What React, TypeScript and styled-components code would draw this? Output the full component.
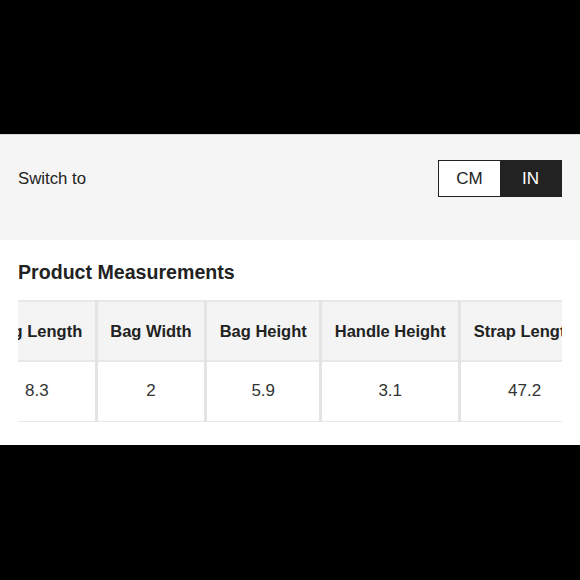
import React, { FC, useEffect, useRef } from 'react';
import styled, { createGlobalStyle } from 'styled-components';

const GlobalStyle = createGlobalStyle`
  html, body {
    margin: 0;
    padding: 0;
    background: #000;
  }
  body {
    font-family: 'Liberation Sans', Arial, sans-serif;
    color: #222;
  }
`;

const Page = styled.div`
  width: 580px;
  height: 580px;
  display: flex;
  flex-direction: column;
  padding-top: 134px;
  box-sizing: border-box;
`;

const Panel = styled.div`
  display: flex;
  flex-direction: column;
  border-top: 1px solid #d8d8d8;
`;

const UnitBar = styled.div`
  background: #f5f5f5;
  display: flex;
  justify-content: space-between;
  align-items: center;
  padding: 25px 18px 43px;
  height: 37px;
`;

const Label = styled.span`
  font-size: 16.8px;
  color: #222;
`;

const Toggle = styled.div`
  display: flex;
  border: 1.5px solid #222;
  height: 37px;
  box-sizing: border-box;
`;

const ToggleOption = styled.div<{ $active?: boolean }>`
  width: 61px;
  display: flex;
  align-items: center;
  justify-content: center;
  font-size: 17px;
  background: ${(p) => (p.$active ? '#222' : '#fff')};
  color: ${(p) => (p.$active ? '#fff' : '#222')};
`;

const Section = styled.div`
  background: #fff;
  padding: 21px 18px 23px;
`;

const Title = styled.h2`
  margin: 0 0 17px;
  font-size: 19.6px;
  font-weight: bold;
  line-height: 22px;
  color: #222;
`;

const Scroller = styled.div`
  overflow-x: auto;
  scrollbar-width: none;
  &::-webkit-scrollbar {
    display: none;
  }
`;

const Table = styled.table`
  border-collapse: collapse;
  white-space: nowrap;
`;

const HeadCell = styled.th`
  height: 60px;
  padding: 0 12.5px;
  background: #f4f4f4;
  border-top: 2px solid #e8e8e8;
  border-bottom: 2px solid #e8e8e8;
  border-right: 3px solid #e4e4e4;
  font-size: 16.5px;
  font-weight: bold;
  color: #222;
  box-sizing: border-box;
`;

const Cell = styled.td`
  height: 60px;
  padding: 0 12.5px;
  text-align: center;
  border-bottom: 1.5px solid #e8e8e8;
  border-right: 3px solid #e4e4e4;
  font-size: 17px;
  color: #333;
  box-sizing: border-box;
`;

const measurements = [
  { label: 'Bag Length', value: '8.3' },
  { label: 'Bag Width', value: '2' },
  { label: 'Bag Height', value: '5.9' },
  { label: 'Handle Height', value: '3.1' },
  { label: 'Strap Length', value: '47.2' },
];

const App: FC = () => {
  const scrollRef = useRef<HTMLDivElement>(null);

  useEffect(() => {
    // table is shown scrolled a little to the right
    if (scrollRef.current) scrollRef.current.scrollLeft = 39;
  }, []);

  return (
    <>
      <GlobalStyle />
      <Page>
        <Panel>
          <UnitBar>
            <Label>Switch to</Label>
            <Toggle>
              <ToggleOption>CM</ToggleOption>
              <ToggleOption $active>IN</ToggleOption>
            </Toggle>
          </UnitBar>
          <Section>
            <Title>Product Measurements</Title>
            <Scroller ref={scrollRef}>
              <Table>
                <thead>
                  <tr>
                    {measurements.map((m) => (
                      <HeadCell key={m.label}>{m.label}</HeadCell>
                    ))}
                  </tr>
                </thead>
                <tbody>
                  <tr>
                    {measurements.map((m) => (
                      <Cell key={m.label}>{m.value}</Cell>
                    ))}
                  </tr>
                </tbody>
              </Table>
            </Scroller>
          </Section>
        </Panel>
      </Page>
    </>
  );
};

export default App;
